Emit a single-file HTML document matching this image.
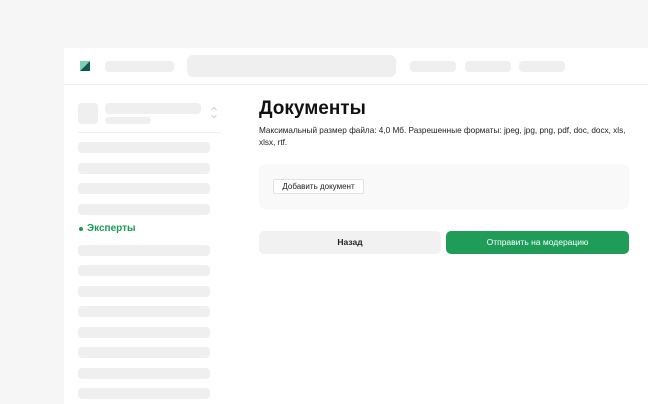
<!DOCTYPE html>
<html><head><meta charset="utf-8"><style>
*{margin:0;padding:0;box-sizing:border-box}
body{width:648px;height:404px;background:#f6f6f6;font-family:"Liberation Sans",Arial,sans-serif;position:relative;overflow:hidden}
.a{position:absolute}
.g{background:#efefef;border-radius:4px}
</style></head><body>
<div class="a" style="left:64px;top:48px;width:584px;height:356px;background:#fff"></div>
<div class="a" style="left:64px;top:84px;width:584px;height:1px;background:#eeeeee"></div>
<svg class="a" style="left:80px;top:61px" width="10" height="10"><polygon points="0,0 10,0 0,10" fill="#7fcfb2"/><polygon points="10,0 10,10 0,10" fill="#0c5a52"/></svg>
<div class="a g" style="left:105px;top:61px;width:69px;height:11px"></div>
<div class="a g" style="left:187px;top:55px;width:209px;height:22px;border-radius:6px"></div>
<div class="a g" style="left:410px;top:61px;width:46px;height:11px"></div>
<div class="a g" style="left:465px;top:61px;width:46px;height:11px"></div>
<div class="a g" style="left:519px;top:61px;width:46px;height:11px"></div>
<div class="a g" style="left:78px;top:103px;width:20px;height:21px"></div>
<div class="a g" style="left:105px;top:103px;width:96px;height:11px"></div>
<div class="a g" style="left:105px;top:117px;width:46px;height:7px"></div>
<svg class="a" style="left:210px;top:106px" width="8" height="13" fill="none" stroke="#c4c4c4" stroke-width="0.8"><path d="M1.5 4 L4 1.5 L6.5 4 M1.5 9 L4 11.5 L6.5 9"/></svg>
<div class="a" style="left:78px;top:132px;width:143px;height:1px;background:#eee"></div>
<div class="a g" style="left:78px;top:142px;width:132px;height:11px"></div>
<div class="a g" style="left:78px;top:163px;width:132px;height:11px"></div>
<div class="a g" style="left:78px;top:183px;width:132px;height:11px"></div>
<div class="a g" style="left:78px;top:204px;width:132px;height:11px"></div>
<div class="a" style="left:79px;top:227px;width:4px;height:4px;border-radius:50%;background:#1a9a5a"></div>
<div class="a" style="left:87px;top:223px;font-size:10px;color:#1a9a5a;font-weight:bold">Эксперты</div>
<div class="a g" style="left:78px;top:245px;width:132px;height:11px"></div>
<div class="a g" style="left:78px;top:265px;width:132px;height:11px"></div>
<div class="a g" style="left:78px;top:286px;width:132px;height:11px"></div>
<div class="a g" style="left:78px;top:306px;width:132px;height:11px"></div>
<div class="a g" style="left:78px;top:327px;width:132px;height:11px"></div>
<div class="a g" style="left:78px;top:347px;width:132px;height:11px"></div>
<div class="a g" style="left:78px;top:368px;width:132px;height:11px"></div>
<div class="a g" style="left:78px;top:388px;width:132px;height:11px"></div>
<div class="a" style="left:259px;top:98px;font-size:19px;font-weight:bold;color:#111">Документы</div>
<div class="a" style="left:259px;top:125px;width:380px;font-size:8.2px;line-height:11.5px;color:#222">Максимальный размер файла: 4,0 Мб. Разрешенные форматы: jpeg, jpg, png, pdf, doc, docx, xls,<br>xlsx, rtf.</div>
<div class="a" style="left:259px;top:164px;width:370px;height:45px;background:#f9f9f9;border-radius:6px"></div>
<div class="a" style="left:273px;top:179px;width:91px;height:15px;background:#fff;border:1px solid #e2e2e2;border-radius:2px;font-size:8px;line-height:13px;text-align:center;color:#222">Добавить документ</div>
<div class="a" style="left:259px;top:231px;width:182px;height:23px;background:#f1f1f1;border-radius:5px;font-size:8.5px;line-height:23px;text-align:center;color:#222;font-weight:bold">Назад</div>
<div class="a" style="left:446px;top:231px;width:183px;height:23px;background:#1e9c58;border-radius:5px;font-size:8.5px;line-height:23px;text-align:center;color:#fff">Отправить на модерацию</div>
</body></html>
